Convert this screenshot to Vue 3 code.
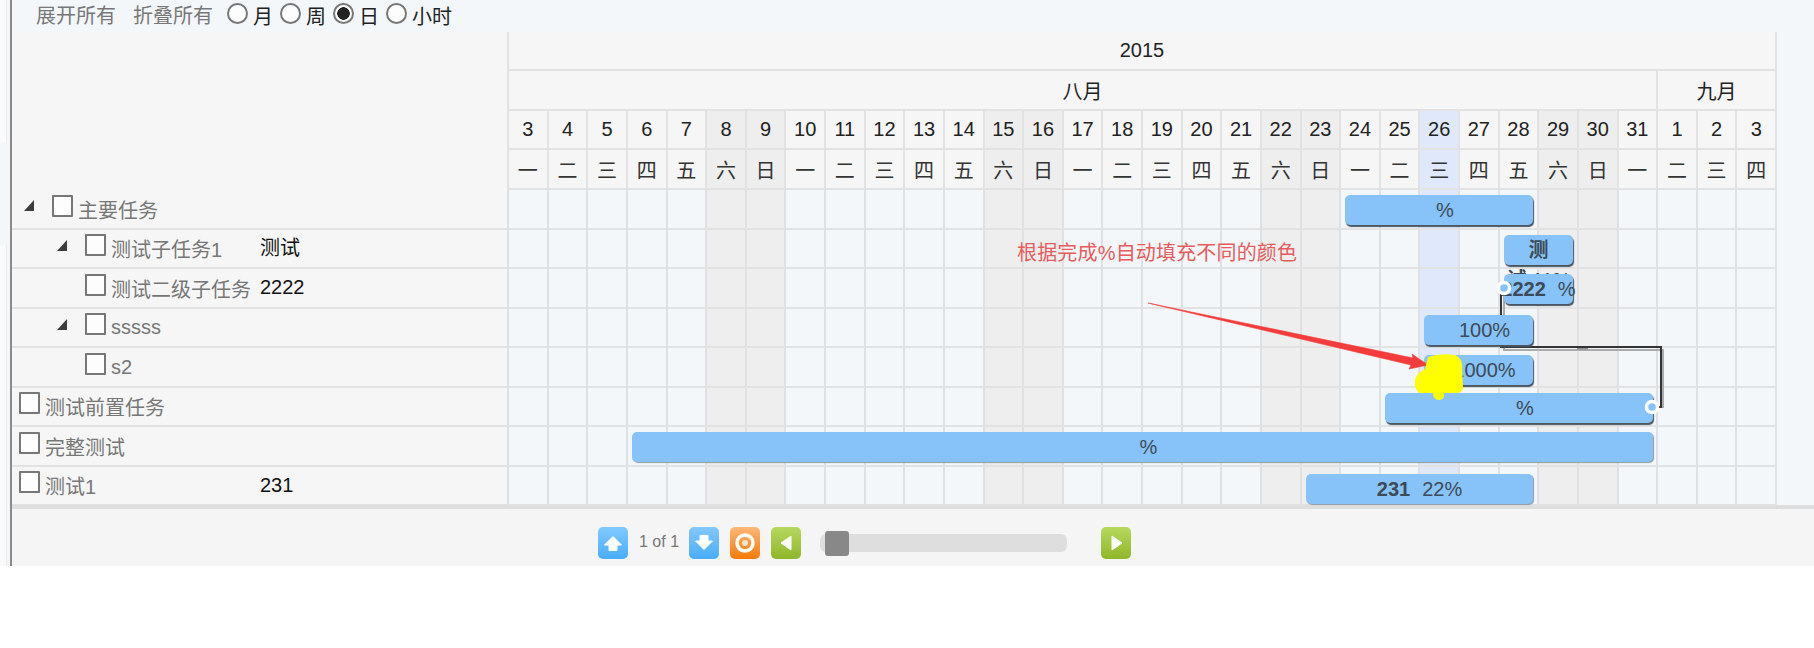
<template>
  <div class="shell">
    <div class="rail">
      <div class="stub top"></div>
      <div class="stub bottom"></div>
    </div>
    <div class="main">
      <div class="toolbar">
        <span class="act">展开所有</span>
        <span class="act">折叠所有</span>
        <label v-for="m in scales" :key="m" class="scale">
          <input type="radio" name="scale" :value="m" v-model="scale" />
          <span>{{ m }}</span>
        </label>
      </div>

      <div class="head">
        <div class="head-left"></div>
        <div class="timeline">
          <div class="cell year" style="grid-column: span 32">2015</div>
          <div class="cell month" style="grid-column: span 29">八月</div>
          <div class="cell month" style="grid-column: span 3">九月</div>
          <div v-for="d in days" :key="'d' + d.key" class="cell day" :class="d.kind">{{ d.num }}</div>
          <div v-for="d in days" :key="'w' + d.key" class="cell week" :class="d.kind">{{ d.week }}</div>
        </div>
      </div>

      <div v-for="t in tasks" :key="t.name" class="row">
        <div class="name" :style="{ paddingLeft: t.pad + 'px' }">
          <i v-if="t.tree" class="tri"></i>
          <input type="checkbox" class="check" />
          <span>{{ t.name }}</span>
        </div>
        <div class="value">{{ t.value }}</div>
        <div class="track">
          <div v-for="d in days" :key="d.key" class="slot" :class="d.kind"></div>
          <div
            class="bar"
            :class="{ flat: t.flat }"
            :style="{ left: t.left + 'px', width: t.width + 'px', top: t.top + 'px' }"
          >
            <template v-if="t.wrap">
              <b class="wrap">测<br />试 <em>11%</em></b>
            </template>
            <template v-else>
              <b>{{ t.value }}</b>
              <span>{{ t.pct }}</span>
            </template>
          </div>
        </div>
      </div>

      <div class="pager">
        <button class="btn blue">
          <svg viewBox="0 0 30 32"><path d="M15 9.5 23.5 18H19v5.5h-8V18H6.500z" fill="#fff" stroke="#fff" stroke-linejoin="round" /></svg>
        </button>
        <span class="count">1 of 1</span>
        <button class="btn blue">
          <svg viewBox="0 0 30 32"><path d="M11 8.500h8V14h4.500L15 22.500 6.500 14H11z" fill="#fff" stroke="#fff" stroke-linejoin="round" /></svg>
        </button>
        <button class="btn orange">
          <svg viewBox="0 0 30 32">
            <circle cx="15" cy="16" r="8" fill="none" stroke="#fff" stroke-width="3.500" />
            <circle cx="15" cy="16" r="3" fill="#fde3c8" />
          </svg>
        </button>
        <button class="btn green">
          <svg viewBox="0 0 30 32"><path d="M20 9v14l-10-7z" fill="#fff" stroke="#fff" stroke-linejoin="round" /></svg>
        </button>
        <div class="slider"><div class="knob"></div></div>
        <button class="btn green">
          <svg viewBox="0 0 30 32"><path d="M11 9v14l10-7z" fill="#fff" stroke="#fff" stroke-linejoin="round" /></svg>
        </button>
      </div>
    </div>

    <!-- dependency lines run behind the bars -->
    <svg class="links" viewBox="0 0 1814 648">
      <path d="M1504 296V350H1663V408" fill="none" stroke="#a9abad" stroke-width="2" />
      <path d="M1577 348.500H1588" fill="none" stroke="#8b8d90" stroke-width="2" />
      <path d="M1501 293V347H1661V407H1656" fill="none" stroke="#333" stroke-width="2" />
    </svg>

    <!-- annotation drawn on top of the screenshot -->
    <svg class="marks" viewBox="0 0 1814 648">
      <circle cx="1504" cy="288" r="5.500" fill="#87c3f8" stroke="#fff" stroke-width="3.500" />
      <circle cx="1652" cy="407" r="5.500" fill="#87c3f8" stroke="#fff" stroke-width="3.500" />
      <path d="M1148 303 1413 358 1412 354 1428 365 1409 369 1411 365z" fill="#f33c3c" stroke="#f33c3c" stroke-width=".6" stroke-linejoin="round" />
      <path
        d="M1428 357Q1440 353 1455 355Q1463 358 1462 368L1463 388Q1463 393 1455 393L1444 393Q1445 400 1439 400Q1433 400 1433 393L1420 393Q1414 390 1415 380Q1417 373 1425 369Z"
        fill="#ff0"
      />
    </svg>
    <div class="note">根据完成%自动填充不同的颜色</div>
  </div>
</template>

<script setup>
import { ref } from 'vue'

const scales = ['月', '周', '日', '小时']
const scale = ref('日')

const weekNames = ['日', '一', '二', '三', '四', '五', '六']

// 2015-08-03 .. 2015-09-03
const days = []
for (let i = 0; i < 32; i++) {
  const date = new Date(2015, 7, 3 + i)
  const wd = date.getDay()
  const num = date.getDate()
  let kind = ''
  if (wd === 0 || wd === 6) kind = 'weekend'
  if (date.getMonth() === 7 && num === 26) kind = 'today'
  days.push({ key: i, num, week: weekNames[wd], kind })
}

const tasks = [
  { name: '主要任务', value: '', pct: '%', pad: 12, tree: true, left: 838, width: 188, top: 5 },
  { name: '测试子任务1', value: '测试', wrap: true, pad: 45, tree: true, left: 997, width: 69, top: 5 },
  { name: '测试二级子任务', value: '2222', pct: '%', pad: 73, left: 997, width: 69, top: 5 },
  { name: 'sssss', value: '', pct: '100%', pad: 45, tree: true, left: 917, width: 109, top: 6 },
  { name: 's2', value: '', pct: '1000%', pad: 73, left: 917, width: 109, top: 7 },
  { name: '测试前置任务', value: '', pct: '%', pad: 7, left: 878, width: 268, top: 5 },
  { name: '完整测试', value: '', pct: '%', pad: 7, left: 125, width: 1021, top: 5, flat: true },
  { name: '测试1', value: '231', pct: '22%', pad: 7, left: 799, width: 227, top: 7, flat: true }
]
</script>

<style>
html,
body {
  background: #fff;
}
</style>

<style scoped>
.shell {
  position: relative;
  display: flex;
  width: 1814px;
  height: 566px;
  overflow: hidden;
  background: #f4f7fa;
  font-family: "Liberation Sans", "Noto Sans CJK SC", sans-serif;
  font-size: 20px;
  color: #222;
}
.rail {
  flex: none;
  display: flex;
  flex-direction: column;
  justify-content: space-between;
  width: 10px;
  border-right: 2px solid #8a8a8a;
  box-sizing: content-box;
}
.stub {
  width: 6px;
  background: #fafafa;
  border-right: 1px solid #ececec;
}
.stub.top {
  height: 143px;
}
.stub.bottom {
  height: 321px;
}
.main {
  flex: 1;
  min-width: 0;
}
.toolbar {
  display: flex;
  align-items: center;
  height: 32px;
  padding-left: 24px;
  color: #777;
}
.act {
  margin-right: 17px;
  margin-top: -4px;
}
.scale {
  display: flex;
  align-items: center;
  color: #222;
}
.scale span {
  margin: -2px 7px 0 5px;
}
.scale:first-of-type {
  margin-left: -3px;
}
.scale input {
  appearance: none;
  width: 21px;
  height: 21px;
  margin: -5px 0 0;
  border: 2px solid #777;
  border-radius: 50%;
  background: #fdfdfd;
}
.scale input:checked {
  background: radial-gradient(circle, #222 0 6px, #fdfdfd 6.500px);
}
.head {
  display: flex;
  width: 1767px;
  background: #f6f6f6;
}
.head-left {
  width: 495px;
  flex: none;
}
.timeline {
  flex: none;
  display: grid;
  grid-template-columns: repeat(32, 1fr);
  grid-template-rows: 39px 40px 39px 40px;
  width: 1270px;
  border-right: 2px solid #e2e2e2;
  box-sizing: border-box;
}
.cell {
  display: flex;
  align-items: center;
  justify-content: center;
  border-left: 2px solid #e2e2e2;
  border-bottom: 2px solid #e2e2e2;
  box-sizing: border-box;
  color: #222;
}
.cell.week {
  color: #333;
}
.weekend {
  background: #eeeeee;
}
.today {
  background: #e0e9fb;
}
.row {
  display: flex;
  width: 1765px;
  height: 39.500px;
  background: #f6f6f6;
  border-bottom: 2px solid #e2e2e2;
  box-sizing: border-box;
}
.name {
  flex: none;
  display: flex;
  align-items: center;
  width: 248px;
  box-sizing: border-box;
  color: #777;
  white-space: nowrap;
}
.name span {
  margin-top: 1px;
}
.tri {
  flex: none;
  width: 0;
  height: 0;
  margin-right: 18px;
  margin-top: -6px;
  border-style: solid;
  border-width: 0 0 11px 10px;
  border-color: transparent transparent #3c3c3c transparent;
}
.check {
  flex: none;
  appearance: none;
  width: 21px;
  height: 22px;
  margin: -6px 5px 0 0;
  border: 2px solid #777;
  border-radius: 1px;
  background: #fdfdfd;
}
.value {
  flex: none;
  width: 247px;
  line-height: 36px;
  color: #111;
}
.track {
  position: relative;
  flex: none;
  display: grid;
  grid-template-columns: repeat(32, 1fr);
  width: 1270px;
  margin-bottom: -2px;
  border-right: 2px solid #e2e2e2;
  box-sizing: border-box;
  background: #f4f7fa;
}
.slot {
  border-left: 2px solid #dfe0e3;
  border-bottom: 2px solid #e2e2e2;
}
.bar {
  position: absolute;
  z-index: 1;
  display: flex;
  align-items: center;
  justify-content: center;
  gap: 12px;
  height: 30px;
  border-radius: 5px;
  background: #87c3f8;
  box-shadow: 1px 2px 1px #4a5663;
  color: #3d4a57;
  line-height: 30px;
  white-space: nowrap;
}
.bar.flat {
  box-shadow: 1px 1px 1px #8d9aa6;
}
.bar b {
  flex: none;
}
.bar .wrap {
  align-self: flex-start;
  text-align: center;
}
.bar .wrap em {
  font-style: normal;
  font-weight: 400;
}
.links,
.marks {
  position: absolute;
  top: 0;
  left: 0;
  width: 1814px;
  height: 648px;
  pointer-events: none;
}
.links {
  z-index: 0;
}
.marks {
  z-index: 2;
}
.note {
  position: absolute;
  z-index: 2;
  top: 239px;
  left: 1017px;
  color: #e85c5c;
  line-height: 28px;
  letter-spacing: 0.17px;
  white-space: nowrap;
}
.pager {
  display: flex;
  align-items: center;
  height: 62px;
  margin-top: -1px;
  padding: 10px 0 0 586px;
  border-top: 4px solid #dedede;
  box-sizing: border-box;
  background: #f5f5f5;
}
.btn {
  flex: none;
  width: 30px;
  height: 32px;
  padding: 0;
  border: 0;
  border-radius: 5px;
  margin-right: 11px;
}
.btn svg {
  display: block;
  width: 30px;
  height: 32px;
}
.blue {
  background: linear-gradient(#82c8ff, #48aeff);
}
.orange {
  background: linear-gradient(#fdb878, #f47a08);
}
.green {
  background: linear-gradient(#b6d95e, #90b62a);
}
.count {
  width: 50px;
  margin-top: -3px;
  color: #777;
  font-size: 16px;
}
.slider {
  position: relative;
  flex: none;
  width: 247px;
  height: 18px;
  margin: 0 34px 0 8px;
  border-radius: 6px;
  background: #dedede;
}
.knob {
  position: absolute;
  top: -3px;
  left: 5px;
  width: 24px;
  height: 25px;
  border-radius: 3px;
  background: #888;
}
</style>
